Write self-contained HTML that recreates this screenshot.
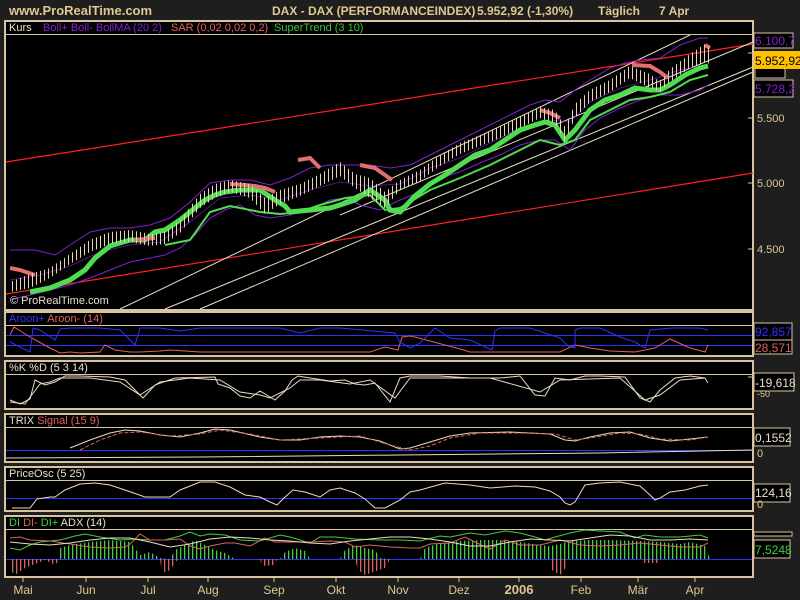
<!DOCTYPE html>
<html><head><meta charset="utf-8"><style>
html,body{margin:0;padding:0;background:#1e1e1e;width:800px;height:600px;overflow:hidden}
svg{display:block}
text{font-family:"Liberation Sans",sans-serif}
</style></head><body>
<svg width="800" height="600" viewBox="0 0 800 600" xmlns="http://www.w3.org/2000/svg">
<defs>
<pattern id="cs" width="4" height="10" patternUnits="userSpaceOnUse"><rect x="0" y="0" width="1" height="10" fill="#e8d4b8"/></pattern>
<pattern id="gb" width="4" height="10" patternUnits="userSpaceOnUse"><rect x="0" y="0" width="1.3" height="10" fill="#40d040"/></pattern>
<pattern id="rb" width="4" height="10" patternUnits="userSpaceOnUse"><rect x="0" y="0" width="1.3" height="10" fill="#e06060"/></pattern>
</defs>
<rect width="800" height="600" fill="#1e1e1e"/>
<text x="9" y="15" font-size="13" font-weight="bold" fill="#e0c890">www.ProRealTime.com</text>
<g font-size="12" font-weight="bold" fill="#e0c890">
<text x="272" y="15">DAX - DAX (PERFORMANCEINDEX)</text>
<text x="477" y="15">5.952,92 (-1,30%)</text>
<text x="598" y="15">Täglich</text>
<text x="659" y="15">7 Apr</text>
</g>

<g fill="#000" stroke="#d8c4a0" stroke-width="2">
<rect x="5" y="21" width="748" height="289"/>
<rect x="5" y="312" width="748" height="44"/>
<rect x="5" y="361" width="748" height="48"/>
<rect x="5" y="414" width="748" height="48"/>
<rect x="5" y="467" width="748" height="44"/>
<rect x="5" y="516" width="748" height="61"/>
</g>
<g stroke="#d8c4a0" stroke-width="1">
<line x1="5" y1="34.5" x2="753" y2="34.5"/>
<line x1="5" y1="325.5" x2="753" y2="325.5"/>
<line x1="5" y1="374.5" x2="753" y2="374.5"/>
<line x1="5" y1="427.5" x2="753" y2="427.5"/>
<line x1="5" y1="480.5" x2="753" y2="480.5"/>
<line x1="5" y1="529.5" x2="753" y2="529.5"/>
</g>
<g font-size="11">
<text x="9" y="31" fill="#e8e0d0">Kurs</text>
<text x="43" y="31" fill="#8020d0">Boll+ Boll- BollMA (20 2)</text>
<text x="171" y="31" fill="#e06060">SAR (0,02 0,02 0,2)</text>
<text x="274" y="31" fill="#40c040">SuperTrend (3 10)</text>
<text x="9" y="322" fill="#3030ff">Aroon+ <tspan fill="#e06060">Aroon- (14)</tspan></text>
<text x="9" y="371" fill="#e8e0d0">%K %D (5 3 14)</text>
<text x="9" y="424" fill="#e8e0d0">TRIX <tspan fill="#e06060">Signal (15 9)</tspan></text>
<text x="9" y="477" fill="#e8e0d0">PriceOsc (5 25)</text>
<text x="9" y="526" fill="#40d040">DI <tspan fill="#e06060">DI-</tspan> DI+ <tspan fill="#e8e0d0">ADX (14)</tspan></text>
</g>

<!-- main chart -->
<g fill="none">
<line x1="6" y1="162" x2="753" y2="44" stroke="#ff2020" stroke-width="1.2"/>
<line x1="6" y1="294" x2="753" y2="173" stroke="#ff2020" stroke-width="1.2"/>
<line x1="120" y1="309" x2="690" y2="35" stroke="#e8dcc4"/>
<line x1="165" y1="309" x2="753" y2="67" stroke="#e8dcc4"/>
<line x1="200" y1="309" x2="753" y2="72" stroke="#e8dcc4"/>
<line x1="340" y1="215" x2="753" y2="42" stroke="#e8dcc4"/>
<polyline stroke="#8020d0" points="10,250 35,250 55,255 70,245 90,232 110,228 130,228 150,225 170,218 190,202 210,183 230,180 250,180 270,185 290,178 310,168 330,165 350,165 370,165 390,168 410,165 430,155 450,145 470,135 490,125 510,115 530,105 545,100 560,102 575,90 590,80 610,68 625,63 640,60 660,58 680,45 700,38 708,38"/>
<polyline stroke="#8020d0" points="10,300 30,295 50,290 70,285 90,278 110,270 130,262 150,258 165,255 180,248 195,235 210,218 225,210 240,205 255,215 270,218 290,215 310,210 330,200 345,198 360,205 380,210 400,200 420,192 440,178 460,172 480,163 500,155 520,145 540,140 555,140 570,150 585,130 600,118 620,108 640,100 660,95 680,95 700,90 708,85"/>
<polyline stroke="#8020d0" stroke-width="0.8" opacity="0.8" points="10,280 40,275 70,266 100,252 130,245 160,242 190,222 220,198 250,195 280,200 310,190 340,182 370,186 400,184 430,168 460,158 490,143 520,128 550,120 570,122 590,102 620,88 650,80 680,70 708,65"/>
<polyline stroke="#50dc50" stroke-width="5" points="30,292 50,288 70,280 85,270 95,258 110,246 130,240 145,240 155,232 165,230 180,220 190,212 205,200 215,195 225,192 240,190 260,190 275,200 285,206 290,212 310,210 330,208 340,205 355,200 370,190 385,200 390,210 400,212 415,196 430,184 445,175 460,165 475,155 490,150 505,140 520,130 535,125 545,122 555,125 565,140 575,130 590,110 605,100 620,95 635,88 650,90 660,90 670,85 685,75 700,68 708,66"/>
<polyline stroke="#50dc50" stroke-width="2" points="165,245 190,240 210,212 230,206 260,212 280,214 300,212 320,205 345,198 370,195 385,210 400,208 430,190 460,178 490,165 520,150 540,140 560,145 575,140 590,120 610,110 630,100 650,97 670,92 690,80 708,75"/>
<polyline stroke="#e07070" stroke-width="4" points="10,268 20,270 35,275"/>
<polyline stroke="#e07070" stroke-width="4" points="135,240 155,238"/>
<polyline stroke="#e07070" stroke-width="4" points="230,184 245,185 255,186 265,188 275,192"/>
<polyline stroke="#e07070" stroke-width="4" points="360,165 375,168 385,175 392,180"/>
<polyline stroke="#e07070" stroke-width="4" points="540,110 550,113 560,118"/>
<polyline stroke="#e07070" stroke-width="4" points="632,65 650,66 660,72 668,78"/>
<polyline stroke="#e07070" stroke-width="4" points="705,45 710,48"/>
<polyline stroke="#e07070" stroke-width="4" points="298,160 310,158 320,168"/>
</g>
<polygon fill="url(#cs)" points="10,282 30,274 50,268 70,254 90,240 110,232 130,230 150,234 165,232 180,220 200,194 215,184 230,180 250,184 265,198 280,190 300,184 320,174 340,162 355,174 370,178 385,192 400,180 420,170 440,155 460,143 480,135 500,127 520,117 540,107 555,110 565,127 575,104 590,90 610,80 630,66 650,74 660,82 670,69 690,54 705,44 710,48 710,64 705,62 690,68 670,82 660,92 650,88 630,78 610,92 590,102 575,118 565,142 555,123 540,118 520,128 500,138 480,146 460,154 440,166 420,181 400,190 385,208 370,198 355,188 340,176 320,186 300,196 280,204 265,214 250,198 230,192 215,198 200,208 180,233 165,244 150,246 130,242 110,244 90,252 70,264 50,278 30,288 10,292"/>
<text x="10" y="304" font-size="11" fill="#e8e0d0">© ProRealTime.com</text>
<g font-size="11" fill="#e0c890">
<text x="757" y="122">5.500</text>
<text x="757" y="187">5.000</text>
<text x="757" y="253">4.500</text>
</g>
<g stroke="#d8c4a0"><line x1="748" y1="118" x2="753" y2="118"/><line x1="748" y1="183" x2="753" y2="183"/><line x1="748" y1="249" x2="753" y2="249"/><line x1="748" y1="53" x2="753" y2="53"/></g>
<rect x="754" y="33" width="39" height="15" fill="#000" stroke="#d8c4a0"/>
<text x="755" y="45" font-size="12" fill="#8020d0">6.100,7</text>
<rect x="755" y="64" width="30" height="14" fill="#000" stroke="#d8c4a0"/>
<rect x="754" y="51" width="46" height="18" fill="#ffc000"/>
<text x="755" y="65" font-size="12" fill="#000">5.952,92</text>
<rect x="754" y="80" width="39" height="17" fill="#000" stroke="#d8c4a0"/>
<text x="755" y="93" font-size="12" fill="#8020d0">5.728,2</text>

<!-- aroon -->
<g fill="none">
<line x1="6" y1="335.5" x2="752" y2="335.5" stroke="#3030ff"/>
<line x1="6" y1="345.5" x2="752" y2="345.5" stroke="#3030ff"/>
<polyline stroke="#e06060" points="10,335 14,327 30,337 50,348 60,353 70,352 80,353 100,352 105,345 115,350 130,352 140,352 160,351 170,350 185,351 200,352 230,352 280,352 300,352 330,352 370,352 385,347 398,350 402,337 410,336 415,337 430,341 460,349 470,352 560,352 575,345 590,348 610,351 635,352 650,349 655,348 670,339 690,348 705,352 708,345"/>
<polyline stroke="#3030ff" points="10,342 30,352 33,328 40,330 55,340 60,329 70,328 100,328 120,330 135,345 140,328 160,328 180,331 200,328 240,328 280,328 300,333 320,328 340,328 395,333 400,342 410,348 420,343 435,328 450,338 470,340 492,350 495,331 500,328 530,328 560,338 568,346 575,348 575,330 580,328 600,328 620,337 635,342 645,348 650,330 672,328 700,328 708,330"/>
</g>
<rect x="754" y="323" width="38" height="17" fill="#000" stroke="#d8c4a0"/>
<text x="755" y="336" font-size="12" fill="#3030ff">92,857</text>
<rect x="754" y="340" width="38" height="14" fill="#000" stroke="#d8c4a0"/>
<text x="755" y="352" font-size="12" fill="#e06060">28,571</text>

<!-- stoch -->
<g fill="none" stroke="#e8dcc4">
<polyline points="10,400 20,404 30,399 35,380 45,385 55,382 65,376 80,376 110,377 125,380 135,390 143,398 155,385 175,378 215,377 218,384 230,388 240,396 250,398 260,391 275,400 285,391 292,380 298,376 310,378 330,381 345,380 355,384 365,385 375,383 390,402 400,378 410,376 440,376 470,378 500,378 520,376 535,395 545,396 555,378 570,380 585,376 600,376 625,377 640,398 650,402 660,390 675,378 690,376 705,378 708,383"/>
<polyline points="10,402 25,404 40,384 50,382 60,378 90,378 120,382 140,395 160,382 190,378 220,380 240,392 260,395 270,398 290,388 300,380 320,380 350,384 370,380 395,398 410,378 440,378 490,378 540,392 560,380 620,378 645,400 660,395 680,380 705,378"/>
</g>
<line x1="748" y1="377" x2="753" y2="377" stroke="#d8c4a0"/>
<rect x="754" y="373" width="40" height="18" fill="#000" stroke="#d8c4a0"/>
<text x="755" y="387" font-size="12" fill="#e8e0d0">-19,618</text>
<text x="757" y="397" font-size="9" fill="#e0c890">-50</text>

<!-- trix -->
<g fill="none">
<line x1="6" y1="450.5" x2="752" y2="450.5" stroke="#3030ff"/>
<polyline stroke="#e8dcc4" points="6,458 200,457 400,455 600,453 752,450"/>
<polyline stroke="#e8dcc4" points="70,448 90,440 110,433 125,430 140,431 160,435 180,437 200,433 215,429 230,430 260,437 280,440 300,440 320,437 340,436 360,437 380,441 400,449 410,448 430,442 450,436 470,433 510,432 550,434 565,440 575,441 590,437 610,433 630,432 650,438 670,441 690,439 708,437"/>
<polyline stroke="#e06060" stroke-dasharray="4 2" points="80,450 100,440 120,433 140,432 170,436 200,434 220,430 250,434 280,440 320,438 360,436 390,445 410,450 430,446 450,438 480,433 520,433 555,434 575,440 590,438 620,433 640,434 660,439 690,440 708,437"/>
</g>
<rect x="754" y="428" width="36" height="18" fill="#000" stroke="#d8c4a0"/>
<text x="755" y="442" font-size="12" fill="#e8e0d0">0,1552</text>
<text x="757" y="457" font-size="11" fill="#e0c890">0</text>

<!-- priceosc -->
<g fill="none">
<line x1="6" y1="498.5" x2="752" y2="498.5" stroke="#3030ff"/>
<polyline stroke="#e8dcc4" points="12,508 30,508 37,499 50,497 55,497 65,490 80,484 95,483 110,485 125,490 145,497 170,497 180,490 200,482 215,482 230,487 245,495 260,497 270,502 277,505 285,497 293,490 305,492 320,497 330,490 340,488 355,493 365,499 375,508 385,508 400,500 410,492 420,490 445,483 470,485 490,488 515,486 535,487 550,491 560,497 565,503 570,505 575,502 585,485 600,483 620,482 640,486 650,495 655,500 660,498 670,492 685,490 700,486 708,485"/>
</g>
<rect x="754" y="484" width="36" height="18" fill="#000" stroke="#d8c4a0"/>
<text x="755" y="497" font-size="12" fill="#e8e0d0">124,16</text>
<text x="757" y="508" font-size="11" fill="#e0c890">0</text>

<!-- DI -->
<line x1="6" y1="559.5" x2="752" y2="559.5" stroke="#3030ff"/>
<polygon fill="url(#gb)" points="60,559 60,548 70,545 90,542 110,540 130,542 140,555 150,552 160,558 170,559 175,550 185,545 195,540 205,545 215,550 225,553 235,559 280,559 285,552 295,548 305,551 310,559 340,559 345,550 355,545 365,548 375,550 380,558 390,559 420,559 425,548 440,543 460,541 480,540 500,540 520,542 540,545 550,546 560,544 570,541 590,540 610,540 640,541 660,542 680,544 690,542 705,546 710,559"/>
<polygon fill="url(#rb)" points="10,559 10,570 15,575 25,568 35,564 45,560 55,565 60,559"/>
<polygon fill="url(#rb)" points="160,559 162,573 170,570 178,559"/>
<polygon fill="url(#rb)" points="260,559 262,566 275,565 277,559"/>
<polygon fill="url(#rb)" points="355,559 358,570 365,575 385,568 390,559"/>
<polygon fill="url(#rb)" points="550,559 552,570 560,575 567,566 568,559"/>
<polygon fill="url(#rb)" points="642,559 644,563 660,563 660,559"/>
<g fill="none">
<polyline stroke="#40d040" points="10,548 20,550 30,545 40,542 60,540 75,536 85,534 100,537 120,540 135,539 150,540 165,540 180,536 190,532 200,536 210,534 225,535 240,540 260,541 280,535 290,537 300,540 310,543 320,537 335,537 355,539 380,540 400,540 420,541 440,536 450,537 470,533 485,535 505,531 520,533 535,537 545,540 555,537 570,533 585,530 600,531 620,532 635,538 645,535 660,537 680,537 700,535 708,538"/>
<polyline stroke="#e06060" points="10,538 20,537 30,540 50,541 70,544 90,547 110,548 125,547 130,544 140,534 150,540 165,540 180,539 190,546 200,549 210,546 225,543 235,543 250,546 265,538 275,542 290,542 310,542 330,541 345,542 355,547 370,545 390,547 410,548 420,548 430,544 450,543 465,537 475,542 490,549 505,540 520,545 540,545 560,540 580,545 600,546 620,545 640,543 660,545 680,547 700,547 708,543"/>
<polyline stroke="#e8dcc4" points="10,542 30,544 50,545 70,543 90,540 110,538 130,538 150,542 170,547 190,544 210,539 230,537 250,538 270,540 290,541 310,543 330,544 350,541 370,539 390,537 410,537 430,539 450,542 470,546 490,546 510,542 530,539 550,540 570,541 590,538 610,535 630,536 650,540 670,540 690,539 708,540"/>
</g>
<rect x="754" y="540" width="36" height="18" fill="#000" stroke="#d8c4a0"/>
<text x="755" y="554" font-size="12" fill="#40d040">7,5248</text>
<rect x="754" y="532" width="38" height="4" fill="#000" stroke="#d8c4a0"/>

<g stroke="#d8c4a0">
<line x1="23" y1="577" x2="23" y2="582"/><line x1="86" y1="577" x2="86" y2="582"/><line x1="148" y1="577" x2="148" y2="582"/><line x1="208" y1="577" x2="208" y2="582"/><line x1="274" y1="577" x2="274" y2="582"/><line x1="336" y1="577" x2="336" y2="582"/><line x1="398" y1="577" x2="398" y2="582"/><line x1="459" y1="577" x2="459" y2="582"/><line x1="519" y1="577" x2="519" y2="582"/><line x1="581" y1="577" x2="581" y2="582"/><line x1="638" y1="577" x2="638" y2="582"/><line x1="695" y1="577" x2="695" y2="582"/>
</g>
<g font-size="12" fill="#e0c890" text-anchor="middle">
<text x="23" y="594">Mai</text><text x="86" y="594">Jun</text><text x="148" y="594">Jul</text><text x="208" y="594">Aug</text><text x="274" y="594">Sep</text><text x="336" y="594">Okt</text><text x="398" y="594">Nov</text><text x="459" y="594">Dez</text><text x="519" y="594" font-weight="bold" font-size="13">2006</text><text x="581" y="594">Feb</text><text x="638" y="594">Mär</text><text x="695" y="594">Apr</text>
</g>
</svg>
</body></html>
